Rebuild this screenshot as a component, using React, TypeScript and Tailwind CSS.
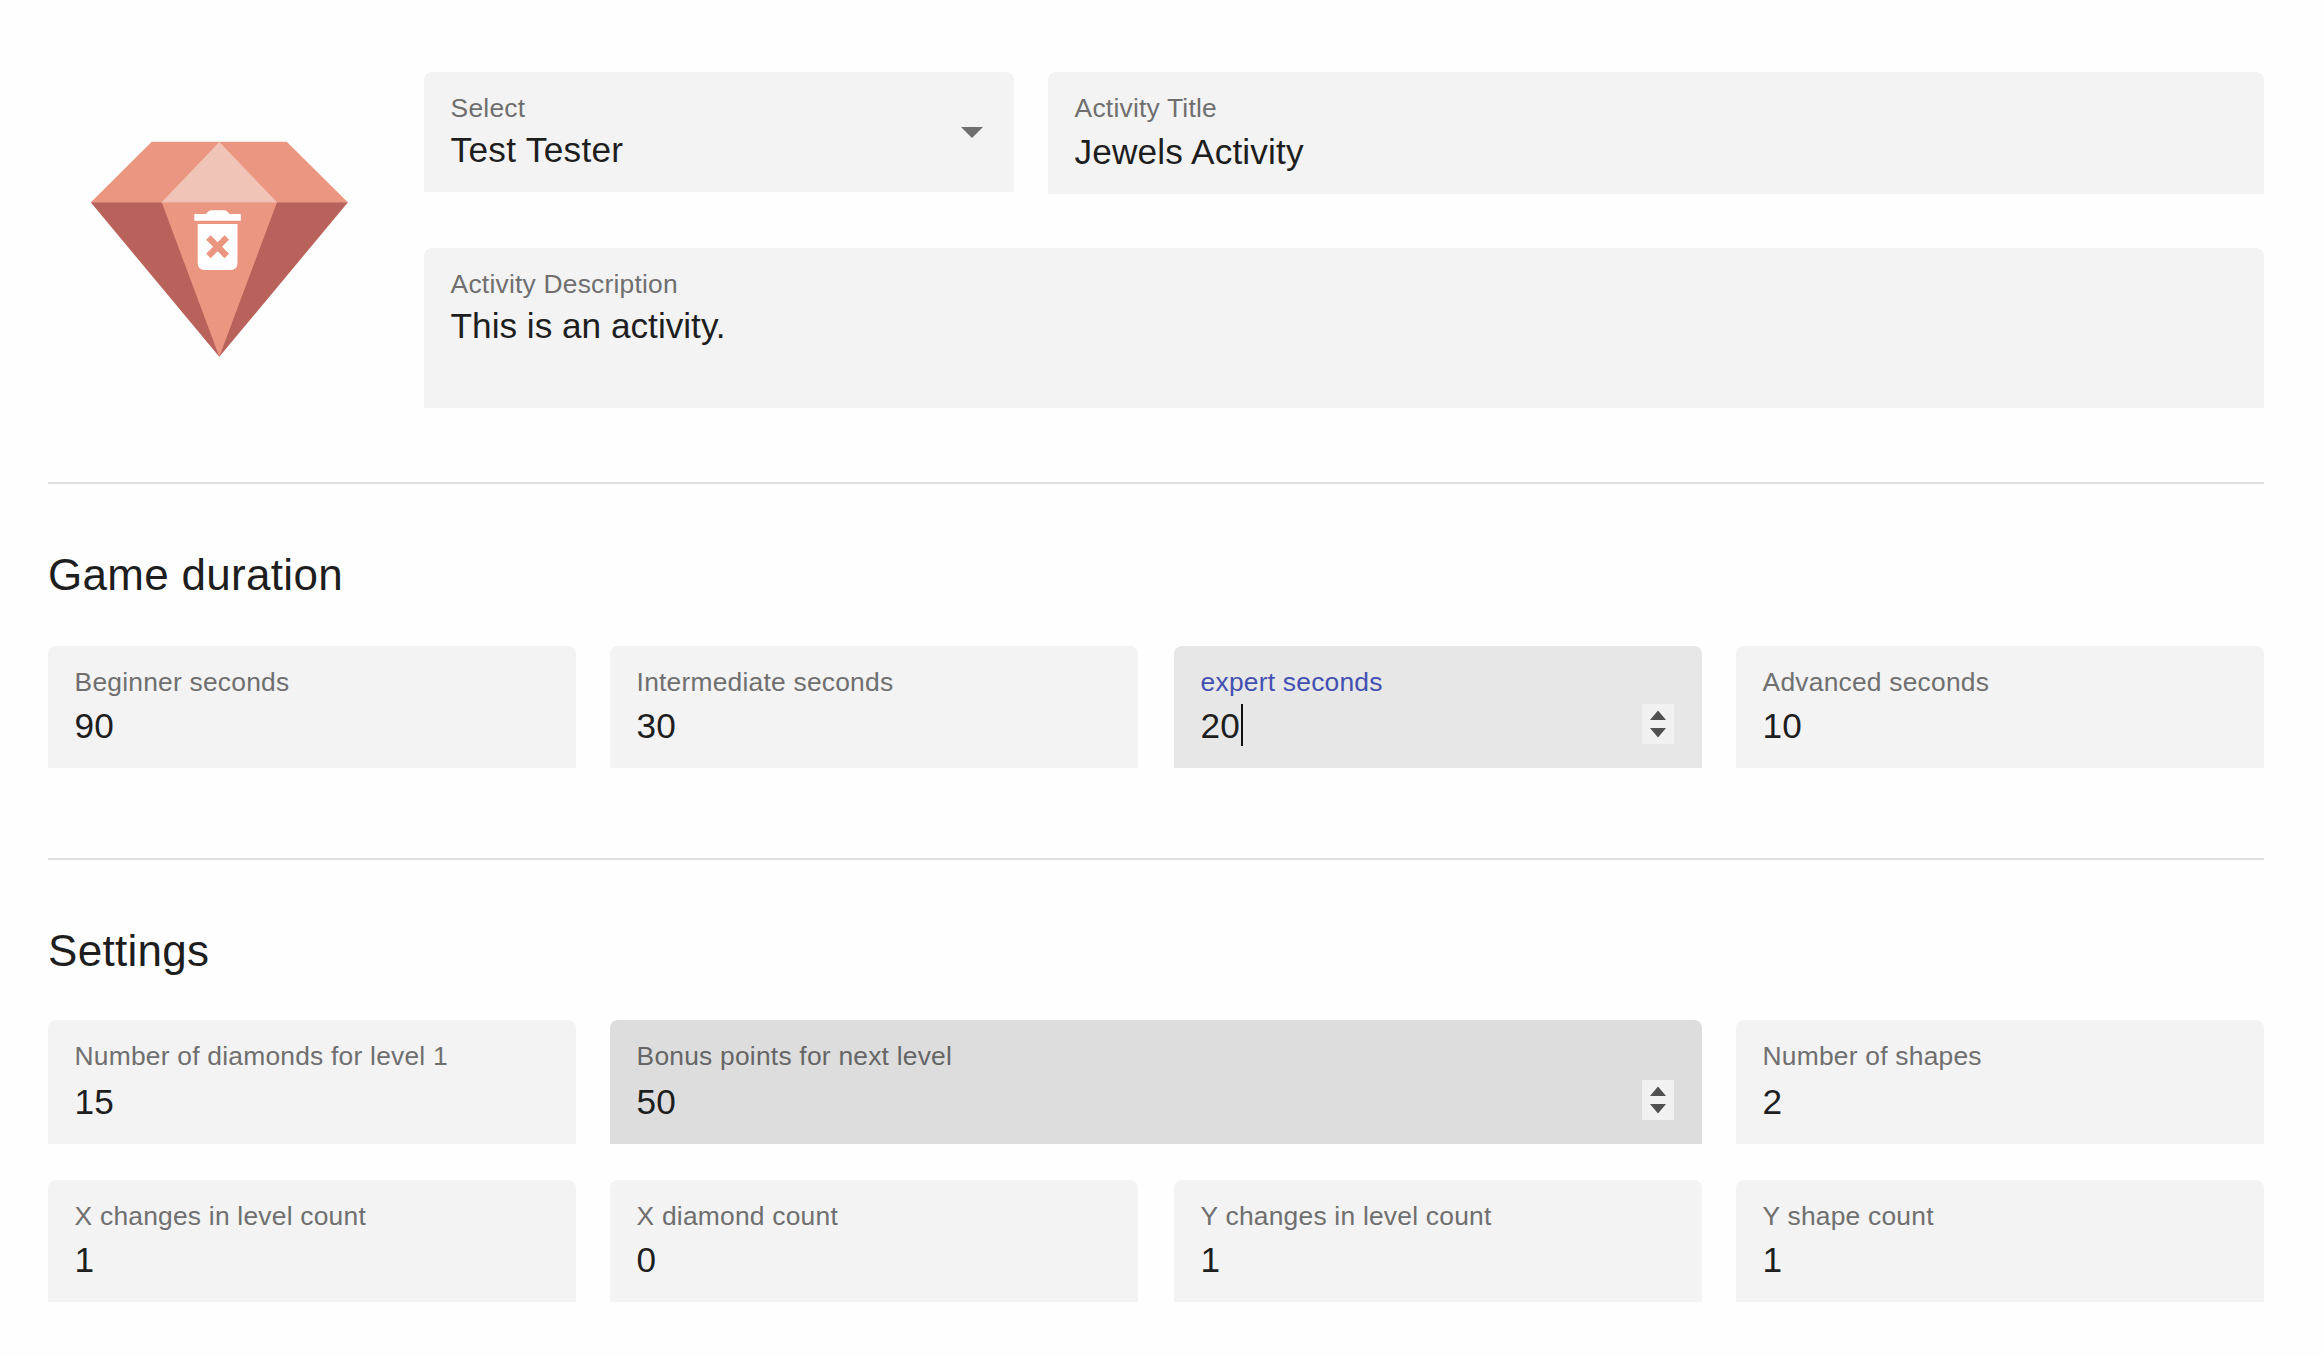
import React from "react";

type FieldProps = {
  label: string;
  value: string;
  className?: string;
  valueClass?: string;
  labelClass?: string;
  bg?: string;
  caret?: boolean;
  children?: React.ReactNode;
};

function Field({
  label,
  value,
  className = "w-[528px] h-[122px]",
  valueClass = "mt-2",
  labelClass = "text-[#6f6f6f]",
  bg = "bg-[#f3f3f3]",
  caret = false,
  children,
}: FieldProps) {
  return (
    <div className={`relative shrink-0 rounded-t-lg pl-[26.6px] pt-5 ${bg} ${className}`}>
      <div className={`text-[26.4px] leading-8 tracking-[0.22px] whitespace-nowrap ${labelClass}`}>{label}</div>
      <div className={`flex h-10 text-[35.2px] leading-10 whitespace-nowrap text-[#1e1e1e] ${valueClass}`}>
        {value}
        {caret && <span className="-mt-0.5 ml-px h-[42px] w-0.5 shrink-0 bg-[#111]" />}
      </div>
      {children}
    </div>
  );
}

function Spinner({ className }: { className: string }) {
  return (
    <svg className={`absolute right-7 h-10 w-8 ${className}`} viewBox="0 0 32 40">
      <rect width="32" height="40" rx="1" fill="#f1f1f1" />
      <path d="M8 16 16 6.5 24 16ZM8 24 16 33.5 24 24Z" fill="#505050" />
    </svg>
  );
}

function Diamond() {
  return (
    <svg className="h-[240px] w-[280px]" viewBox="80 130 280 240">
      <path d="M151.7 141.7H286.7L348 202.5H90.7Z" fill="#eb9680" />
      <path d="M90.7 202.3H348L219.3 356.8Z" fill="#b9625b" />
      <path d="M161.7 202.3H277L219.3 356.8Z" fill="#eb9680" />
      <path d="M219.3 142 277 202.3H161.7Z" fill="#f1c4b8" />
      <path d="M161.7 202.3H277" stroke="#eeb0a0" />
      <path d="M194.3 214H206L209 210.8Q210 210.2 211.5 210.2H224Q225.5 210.2 226.5 210.8L229.5 214H240.8V220.8H194.3Z" fill="#fff" />
      <path d="M197.7 224H237.5V263Q237.5 270 230.5 270H204.7Q197.7 270 197.7 263Z" fill="#fff" />
      <path d="M208.4 237.6 226.8 256M226.8 237.6 208.4 256" stroke="#eb9680" strokeWidth="6.4" />
    </svg>
  );
}

export default function App() {
  return (
    <div className="h-[1356px] w-[2322px] overflow-hidden bg-[#fefefe] pt-[72px] pl-12 font-['Liberation_Sans',Arial,sans-serif]">
      <section className="flex h-[410px] w-[2216px]">
        <div className="w-[376px] shrink-0 pt-[58px] pl-8">
          <Diamond />
        </div>
        <div className="flex flex-col">
          <div className="flex h-[176px] items-start gap-[34px]">
            <Field label="Select" value="Test Tester" className="h-[120px] w-[590px]" valueClass="mt-1.5 tracking-[0.3px]">
              <svg className="absolute top-[55px] right-[31px] h-[11px] w-[22px]" viewBox="0 0 22 11">
                <path d="M0 0H22L11 11Z" fill="#6f6f6f" />
              </svg>
            </Field>
            <Field label="Activity Title" value="Jewels Activity" className="h-[122px] w-[1216px]" valueClass="mt-2 tracking-[0.15px]" />
          </div>
          <Field
            label="Activity Description"
            value="This is an activity."
            className="h-[160px] w-[1840px]"
            valueClass="mt-1.5"
          />
        </div>
      </section>

      <section className="h-[376px] w-[2216px] border-t-2 border-[#dfdfdf] pt-[63px]">
        <h2 className="mb-[43px] text-[44px] leading-[56px] tracking-[0.3px] text-[#1e1e1e]">Game duration</h2>
        <div className="flex gap-[34px]">
          <Field label="Beginner seconds" value="90" />
          <Field label="Intermediate seconds" value="30" />
          <Field
            label="expert seconds"
            value="20"
            className="ml-0.5 h-[122px] w-[528px]"
            bg="bg-[#e7e7e7]"
            labelClass="text-[#4250b0]"
            caret
          >
            <Spinner className="top-[58px]" />
          </Field>
          <Field label="Advanced seconds" value="10" />
        </div>
      </section>

      <section className="w-[2216px] border-t-2 border-[#dfdfdf] pt-[63px]">
        <h2 className="mb-[41px] text-[44px] leading-[56px] tracking-[0.3px] text-[#1e1e1e]">Settings</h2>
        <div className="mb-9 flex gap-[34px]">
          <Field label="Number of diamonds for level 1" value="15" className="h-[124px] w-[528px]" valueClass="mt-2.5" />
          <Field
            label="Bonus points for next level"
            value="50"
            className="h-[124px] w-[1092px]"
            valueClass="mt-2.5"
            bg="bg-[#dddddd]"
            labelClass="text-[#666666]"
          >
            <Spinner className="top-[60px]" />
          </Field>
          <Field label="Number of shapes" value="2" className="h-[124px] w-[528px]" valueClass="mt-2.5" />
        </div>
        <div className="flex gap-[34px]">
          <Field label="X changes in level count" value="1" />
          <Field label="X diamond count" value="0" />
          <Field label="Y changes in level count" value="1" className="ml-0.5 h-[122px] w-[528px]" />
          <Field label="Y shape count" value="1" />
        </div>
      </section>
    </div>
  );
}
